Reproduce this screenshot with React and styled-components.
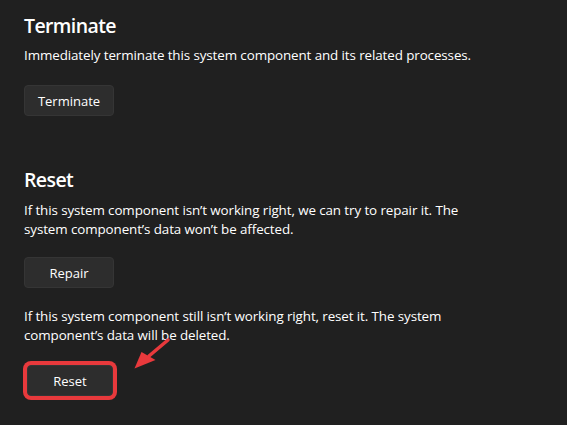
import React from 'react'
import styled, { createGlobalStyle } from 'styled-components'

const GlobalStyle = createGlobalStyle`
    html, body {
        margin: 0;
        padding: 0;
        background: #202020;
    }
    body {
        font-family: "Open Sans", "Noto Sans", "Liberation Sans", sans-serif;
        color: #ffffff;
    }
`

function Arrow() {
    return (
        <ArrowSvg width="50" height="45" viewBox="0 0 50 45">
            <line x1="43" y1="8" x2="24" y2="24" stroke="#e8393c" strokeWidth="3.5" strokeLinecap="round" />
            <polygon points="9.5,36.5 16.5,20 30.5,28" fill="#e8393c" />
        </ArrowSvg>
    )
}

function App() {
    return (
        <Page>
            <GlobalStyle />
            <Section>
                <Title>Terminate</Title>
                <Text>Immediately terminate this system component and its related processes.</Text>
                <Actions>
                    <Button>Terminate</Button>
                </Actions>
            </Section>

            <Section $gap>
                <Title>Reset</Title>
                <Text $under>
                    If this system component isn’t working right, we can try to repair it. The<br />
                    system component’s data won’t be affected.
                </Text>
                <Actions $tight>
                    <Button>Repair</Button>
                </Actions>
                <Text $spaced>
                    If this system component still isn’t working right, reset it. The system<br />
                    component’s data will be deleted.
                </Text>
                <Actions $last>
                    <Button $highlighted>Reset</Button>
                    <Arrow />
                </Actions>
            </Section>
        </Page>
    )
}

export default App

const Page = styled.div`
    width: 567px;
    height: 425px;
    box-sizing: border-box;
    padding: 12px 24px 0;
    background: #202020;
    overflow: hidden;
`

const Section = styled.section`
    display: flex;
    flex-direction: column;
    align-items: flex-start;
    margin-top: ${props => props.$gap ? '50px' : '0'};
`

const Title = styled.h2`
    margin: 0;
    font-size: 19.5px;
    line-height: 28px;
    font-weight: 600;
    color: #ffffff;
    letter-spacing: -0.6px;
`

const Text = styled.p`
    margin: 0;
    margin-top: ${props => props.$spaced ? '19px' : props.$under ? '7px' : '6px'};
    font-size: 13.4px;
    line-height: 19px;
    color: #ffffff;
    letter-spacing: -0.1px;
`

const Actions = styled.div`
    position: relative;
    display: flex;
    align-items: center;
    margin-top: ${props => props.$last ? '20px' : props.$tight ? '18px' : '20px'};
    width: 100%;
`

const Button = styled.button`
    width: ${props => props.$highlighted ? '86px' : '90px'};
    height: 31px;
    margin-left: ${props => props.$highlighted ? '3px' : '0'};
    padding: 0;
    background: #2d2d2d;
    border: 1px solid #353535;
    border-radius: 4px;
    color: #ffffff;
    font-family: inherit;
    font-size: 13px;
    box-shadow: ${props => props.$highlighted ? '0 0 0 4px #e8393c' : 'none'};
`

const ArrowSvg = styled.svg`
    position: absolute;
    left: 101px;
    top: -33px;
`
